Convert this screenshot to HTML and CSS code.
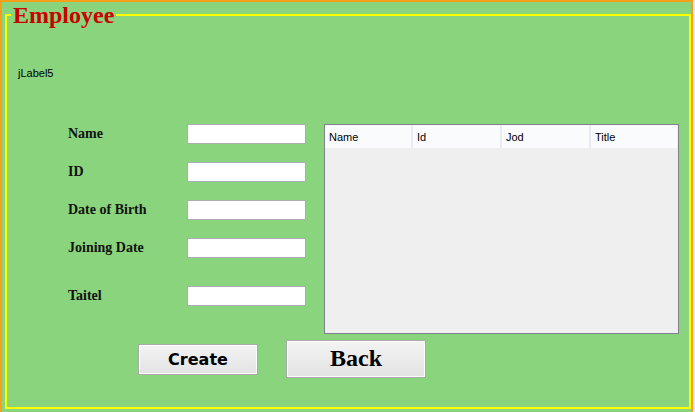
FILE: index.html
```html
<!DOCTYPE html>
<html>
<head>
<meta charset="utf-8">
<link rel="stylesheet" href="styles.css">
</head>
<body>
<div class="frame">
  <div class="group">
    <div class="legend">Employee</div>
    <div class="jlabel">jLabel5</div>
    <div class="main">
      <div class="form">
        <div class="lbl">Name</div><div class="field"></div>
        <div class="lbl">ID</div><div class="field"></div>
        <div class="lbl">Date of Birth</div><div class="field"></div>
        <div class="lbl">Joining Date</div><div class="field"></div>
        <div class="lbl last">Taitel</div><div class="field last"></div>
      </div>
      <div class="table">
        <div class="thead">
          <div class="th">Name</div>
          <div class="th">Id</div>
          <div class="th">Jod</div>
          <div class="th">Title</div>
        </div>
      </div>
    </div>
    <div class="buttons">
      <button class="btn create">Create</button>
      <button class="btn back">Back</button>
    </div>
  </div>
</div>
</body>
</html>
```
FILE: styles.css
```css
html, body {
  margin: 0;
  padding: 0;
}
body {
  background: #e6e6f8;
  width: 695px;
  height: 412px;
  overflow: hidden;
}
.frame {
  width: 689px;
  height: 398px;
  padding-top: 12px;
  border-top: 2px solid #f6a01a;
  border-left: 2px solid #f6a01a;
  border-right: 2px solid #f6a01a;
  background: #89d47d;
}
.group {
  box-sizing: border-box;
  margin-left: 3px;
  width: 686px;
  height: 395px;
  border: 2px solid #ffff00;
  padding-left: 11px;
}
.legend {
  width: fit-content;
  margin-top: -13px;
  margin-left: -7px;
  padding: 0 2px;
  background: #89d47d;
  font-family: "Liberation Serif", serif;
  font-weight: bold;
  font-size: 24px;
  line-height: 24px;
  color: #cc0000;
}
.jlabel {
  margin-top: 39px;
  font-family: "Liberation Sans", sans-serif;
  font-size: 11px;
  line-height: 14px;
  color: #000;
}
.main {
  display: flex;
  align-items: flex-start;
  margin-top: 44px;
  margin-left: 50px;
  gap: 18px;
}
.form {
  display: grid;
  grid-template-columns: 119px 119px;
  grid-auto-rows: 20px;
  row-gap: 18px;
}
.lbl {
  font-family: "Liberation Serif", serif;
  font-weight: bold;
  font-size: 14px;
  line-height: 20px;
  color: #111;
}
.last {
  margin-top: 10px;
}
.field {
  box-sizing: border-box;
  height: 20px;
  border: 1px solid #abacb6;
  background: #fff;
}
.table {
  box-sizing: border-box;
  width: 355px;
  height: 210px;
  border: 1px solid #80808e;
  background: #efefef;
}
.thead {
  display: grid;
  grid-template-columns: 86px 87px 87px 86px;
  column-gap: 2px;
  height: 23px;
  background: #e8ecf2;
  padding-right: 5px;
  background-clip: content-box;
}
.th {
  background: #fafbfd;
  font-family: "Liberation Sans", sans-serif;
  font-size: 11px;
  line-height: 21px;
  padding-top: 2px;
  padding-left: 4px;
  color: #000;
}
.buttons {
  display: flex;
  align-items: center;
  gap: 28px;
  margin-top: 6px;
  margin-left: 120px;
}
.btn {
  box-sizing: border-box;
  border: 1px solid #a9a9a9;
  box-shadow: inset 0 0 0 1px #fff;
  background: linear-gradient(#f3f3f3, #e3e3e3);
  padding: 0;
  color: #000;
  cursor: pointer;
}
.create {
  width: 120px;
  height: 31px;
  font-family: "DejaVu Sans", sans-serif;
  font-weight: bold;
  font-size: 16px;
}
.back {
  width: 140px;
  height: 38px;
  padding-bottom: 2px;
  font-family: "Liberation Serif", serif;
  font-weight: bold;
  font-size: 24px;
}
```
